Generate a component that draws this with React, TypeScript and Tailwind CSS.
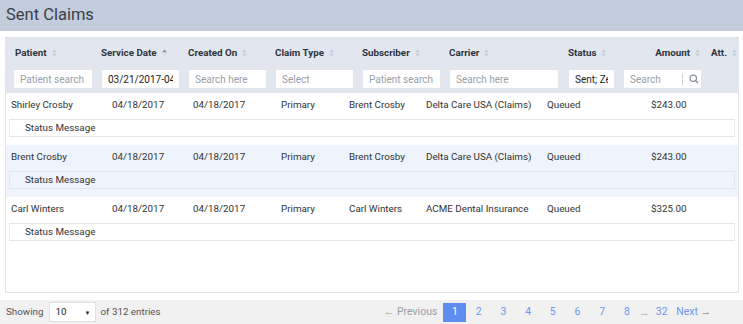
import React from 'react';

const SortIcon: React.FC<{ active?: boolean }> = ({ active }) => (
  <svg width="5" height="8" viewBox="0 0 5 8" className="ml-[5px] inline-block">
    <path d="M2.5 0.5 L4.8 3.2 H0.2 Z" fill={active ? '#7c8ca4' : '#c2cbd8'} />
    <path d="M2.5 7.5 L4.8 4.8 H0.2 Z" fill={active ? '#d4dbe6' : '#c2cbd8'} />
  </svg>
);

const headers = [
  { label: 'Patient', w: 'w-[86px]' },
  { label: 'Service Date', w: 'w-[87px]', active: true },
  { label: 'Created On', w: 'w-[87px]' },
  { label: 'Claim Type', w: 'w-[87px]' },
  { label: 'Subscriber', w: 'w-[87px]' },
  { label: 'Carrier', w: 'w-[119px]' },
  { label: 'Status', w: 'w-[62px]' },
];

const rows = [
  { patient: 'Shirley Crosby', subscriber: 'Brent Crosby', carrier: 'Delta Care USA (Claims)', amount: '$243.00' },
  { patient: 'Brent Crosby', subscriber: 'Brent Crosby', carrier: 'Delta Care USA (Claims)', amount: '$243.00', hl: true },
  { patient: 'Carl Winters', subscriber: 'Carl Winters', carrier: 'ACME Dental Insurance', amount: '$325.00' },
];

const inputCls = 'h-[20px] bg-white border border-[#e3e7ed] px-[6px] text-[10px] outline-none placeholder:text-[#9aa0a8] text-[#222]';

export default function App() {
  return (
    <div className="w-[743px] h-[324px] bg-white overflow-hidden text-[9.8px] text-[#333]" style={{ fontFamily: 'Roboto, "Liberation Sans", sans-serif' }}>
      {/* title */}
      <div className="h-[31px] bg-[#c3ccdc] flex items-center px-[6px]">
        <h1 className="text-[16.5px] text-[#3a3f47] leading-none">Sent Claims</h1>
      </div>

      {/* panel */}
      <div className="mx-[5px] mt-[6px] w-[734px] h-[256px] border border-[#dfe4ec] flex flex-col">
        <div className="bg-[#e1e6ef] h-[55px] pt-[8px]">
          <div className="flex items-center h-[14px] pl-[9px] font-bold text-[#2f3540]">
            {headers.map((h) => (
              <div key={h.label} className={`${h.w} flex items-center`}>
                {h.label}
                <SortIcon active={h.active} />
              </div>
            ))}
            <div className="w-[70px] flex items-center justify-end">
              Amount
              <SortIcon />
            </div>
            <div className="ml-[11px] flex items-center">
              Att.
              <SortIcon />
            </div>
          </div>
          <div className="flex items-center mt-[9px] h-[20px]">
            <input className={`${inputCls} ml-[7px] w-[80px]`} placeholder="Patient search" />
            <input className={`${inputCls} ml-[8px] w-[79px] px-[5px]`} defaultValue="03/21/2017-04/18/2017" />
            <input className={`${inputCls} ml-[8px] w-[79px]`} placeholder="Search here" />
            <input className={`${inputCls} ml-[8px] w-[79px]`} placeholder="Select" />
            <input className={`${inputCls} ml-[8px] w-[79px]`} placeholder="Patient search" />
            <input className={`${inputCls} ml-[8px] w-[110px]`} placeholder="Search here" />
            <input className={`${inputCls} ml-[9px] w-[47px] px-[4px]`} defaultValue="Sent; Zero" />
            <div className="ml-[8px] w-[79px] h-[20px] bg-white border border-[#e3e7ed] flex items-center">
              <input className="w-[58px] h-full px-[6px] text-[10px] outline-none placeholder:text-[#9aa0a8]" placeholder="Search" />
              <div className="w-px h-[12px] bg-[#cfd4db]" />
              <svg width="10" height="10" viewBox="0 0 10 10" className="ml-[6px]">
                <circle cx="4.2" cy="4.2" r="3.2" fill="none" stroke="#7b828c" strokeWidth="1.1" />
                <path d="M6.6 6.6 L9 9" stroke="#7b828c" strokeWidth="1.2" />
              </svg>
            </div>
          </div>
        </div>

        {rows.map((r) => (
          <div key={r.patient} className={`h-[52px] pt-[4px] ${r.hl ? 'bg-[#eef3fc]' : 'bg-white'}`}>
            <div className="flex items-center h-[16px] pl-[5px] text-[#333]">
              <div className="w-[101px]">{r.patient}</div>
              <div className="w-[81px]">04/18/2017</div>
              <div className="w-[88px]">04/18/2017</div>
              <div className="w-[68px]">Primary</div>
              <div className="w-[77px]">{r.subscriber}</div>
              <div className="w-[121px]">{r.carrier}</div>
              <div className="w-[104px]">Queued</div>
              <div>{r.amount}</div>
            </div>
            <div className="mt-[6px] mx-[3px] h-[18px] border border-[#e3e7ed] flex items-center pl-[15px] text-[#333]">
              Status Message
            </div>
          </div>
        ))}
      </div>

      {/* footer */}
      <div className="mt-[7px] h-[24px] bg-[#f1f1f1] flex items-center pl-[6px] pr-[32px]">
        <span className="text-[#555]">Showing</span>
        <div className="ml-[6px] w-[47px] h-[20px] bg-white border border-[#dde2e8] flex items-center justify-between px-[5px]">
          <span className="text-[#222]">10</span>
          <span className="text-[6px] text-[#222]">▼</span>
        </div>
        <span className="ml-[4px] text-[#555]">of 312 entries</span>

        <div className="ml-auto flex items-center text-[#6d97ec] text-[10.5px]">
          <span className="text-[#9aa0a8] mr-[6px]">← Previous</span>
          <span className="w-[23px] h-[19px] bg-[#5d8eef] text-white flex items-center justify-center">1</span>
          {['2', '3', '4', '5', '6', '7', '8'].map((n) => (
            <span key={n} className="w-[24.7px] text-center">{n}</span>
          ))}
          <span className="text-[#999] w-[10px] text-center">…</span>
          <span className="w-[25px] text-center">32</span>
          <span className="ml-[2px]">Next <span className="text-[#6f7a86]">→</span></span>
        </div>
      </div>
    </div>
  );
}
